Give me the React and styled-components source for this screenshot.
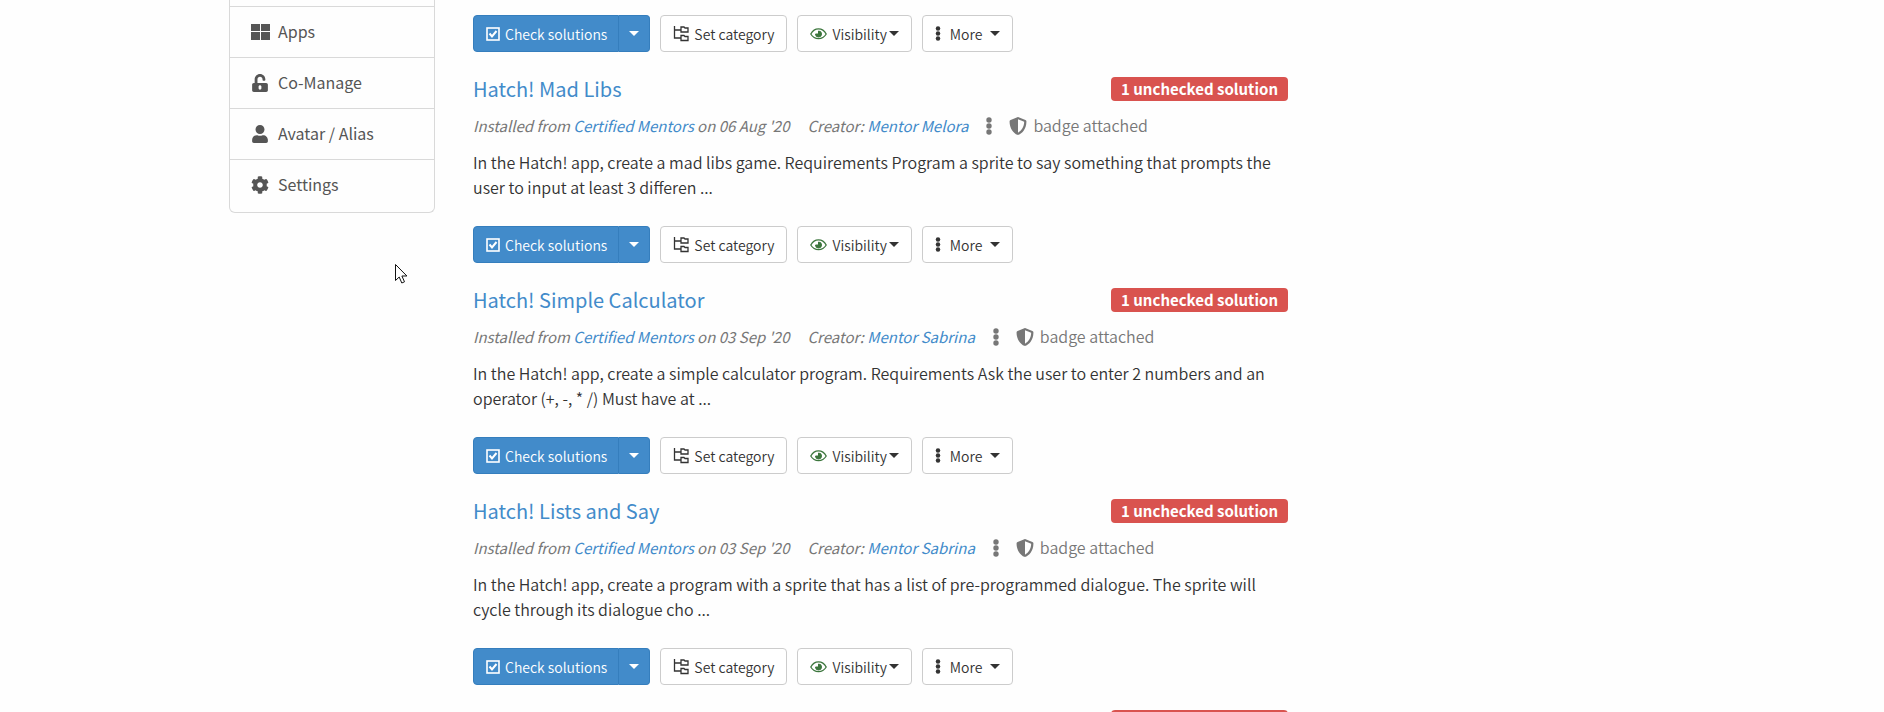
import React from 'react'
import styled, { createGlobalStyle } from 'styled-components'
import { FaUnlockAlt, FaUser, FaCog, FaShieldAlt } from 'react-icons/fa'

const GlobalStyle = createGlobalStyle`
  * {
    box-sizing: border-box;
  }

  body {
    margin: 0;
    background-color: #fefefe;
    color: #333;
    font-family: "Noto Sans CJK SC", "Noto Sans", sans-serif;
    font-size: 16px;
    line-height: 25px;
  }

  a {
    color: #428bca;
    text-decoration: none;
  }

  a:hover {
    text-decoration: underline;
  }
`

const Page = styled.div`
  display: grid;
  grid-template-columns: 206px minmax(0, 815px);
  column-gap: 38px;
  align-items: start;
  max-width: 1426px;
  height: 100vh;
  margin: 0 auto;
  overflow: hidden;
`

const SideNav = styled.nav`
  padding: 6px 0 2px;
  border: 1px solid #d9d9d9;
  border-top: 0;
  border-radius: 0 0 6px 6px;
`

const NavLink = styled.a`
  display: flex;
  align-items: center;
  gap: 8px;
  padding: 12px 20px 13px;
  border-top: 1px solid #d9d9d9;
  color: #555;

  svg {
    width: 20px;
    height: 18px;
  }
`

const Feed = styled.main`
  padding-top: 15px;
`

const Post = styled.article`
  padding-top: 20px;
`

const PostHead = styled.header`
  display: flex;
  justify-content: space-between;
  align-items: flex-start;
  padding-top: 5px;
`

const Title = styled.h3`
  margin: 0;
  font-size: 20px;
  font-weight: 400;
  line-height: 24px;
`

const Badge = styled.span`
  padding: 0 10px;
  border-radius: 4px;
  background-color: #d9534f;
  color: #fff;
  font-size: 15px;
  font-weight: 700;
  line-height: 24px;
`

const Meta = styled.div`
  display: flex;
  align-items: center;
  margin-top: 12px;
  color: #777;
  font-size: 15px;
`

const Source = styled.em`
  margin-right: 18px;
`

const DotsButton = styled.button`
  display: flex;
  margin: 0 17px 0 18px;
  padding: 0;
  border: 0;
  background: none;
  color: inherit;
`

const Attached = styled.span`
  display: flex;
  align-items: center;
  gap: 6px;
  font-size: 16px;
  font-weight: 350;
`

const Summary = styled.p`
  margin: 12px 0 26px;
  font-weight: 350;
`

const Actions = styled.div`
  display: flex;
  gap: 10px;
`

const Group = styled.div`
  display: flex;
`

const Button = styled.button`
  display: flex;
  align-items: center;
  gap: 5px;
  height: 37px;
  padding: 0 12px;
  border: 1px solid ${props => (props.$primary ? '#357ebd' : '#ccc')};
  border-radius: 4px;
  background-color: ${props => (props.$primary ? '#428bca' : '#fff')};
  color: ${props => (props.$primary ? '#fff' : '#333')};
  font-family: inherit;
  font-size: 14px;
  font-weight: 350;
  line-height: 20px;
  cursor: pointer;

  ${Group} > &:first-child {
    padding: 0 11px 0 12px;
    border-radius: 4px 0 0 4px;
  }

  ${Group} > &:last-child {
    padding: 0 10px;
    border-left: 0;
    border-radius: 0 4px 4px 0;
  }
`

const Caret = styled.span`
  margin-left: ${props => props.$space || 0}px;
  border-top: 5px solid;
  border-right: 5px solid transparent;
  border-left: 5px solid transparent;
`

const Label = styled.span`
  display: flex;
  align-items: center;
  margin-left: ${props => props.$space || 0}px;
`

const Pointer = styled.svg`
  position: fixed;
  top: 264px;
  left: 395px;
  pointer-events: none;
`

const AppsIcon = () => (
  <svg viewBox="0 0 20 18" fill="currentColor">
    <path d="M1 1h9v7H1zM11 1h9v7h-9zM1 9h9v8H1zM11 9h9v8h-9z" />
  </svg>
)

const CheckIcon = () => (
  <svg width="14" height="14" viewBox="0 0 14 14" fill="none" stroke="currentColor">
    <rect x="1" y="1" width="12" height="12" strokeWidth="1.6" />
    <path d="M3.500 6.500l2.500 3 4.500-5.500" strokeWidth="2" />
  </svg>
)

const TreeIcon = () => (
  <svg width="16" height="16" viewBox="0 0 16 16" fill="none" stroke="currentColor" strokeWidth="1.3">
    <path d="M1.500 0v12H8M1.500 4H8" />
    <path d="M8 1h3l1 1h3v4H8zM8 9.500h3l1 1h3v4H8z" />
  </svg>
)

const EyeIcon = () => (
  <svg width="17" height="14" viewBox="0 0 17 14" fill="none" stroke="#3c763d">
    <path d="M.8 7C4.500.2 12.500.2 16.200 7 12.500 13.200 4.500 13.200.8 7z" strokeWidth="1.3" />
    <path d="M8.500 4a3 3 0 1 1-3 3h3z" fill="#3c763d" />
  </svg>
)

const DotsIcon = ({ size }) => (
  <svg width="6" height={size} viewBox="0 0 6 18" fill="currentColor">
    <circle cx="3" cy="3" r="2.7" />
    <circle cx="3" cy="9" r="2.7" />
    <circle cx="3" cy="15" r="2.7" />
  </svg>
)

const links = [
  { label: 'Apps', icon: <AppsIcon /> },
  { label: 'Co-Manage', icon: <FaUnlockAlt /> },
  { label: 'Avatar / Alias', icon: <FaUser /> },
  { label: 'Settings', icon: <FaCog /> },
]

const posts = [
  {
    title: 'Hatch! Mad Libs',
    date: "06 Aug '20",
    creator: 'Mentor Melora',
    summary: 'In the Hatch! app, create a mad libs game. Requirements Program a sprite to say something that prompts the user to input at least 3 differen ...',
  },
  {
    title: 'Hatch! Simple Calculator',
    date: "03 Sep '20",
    creator: 'Mentor Sabrina',
    summary: 'In the Hatch! app, create a simple calculator program. Requirements Ask the user to enter 2 numbers and an operator (+, -, * /) Must have at ...',
  },
  {
    title: 'Hatch! Lists and Say',
    date: "03 Sep '20",
    creator: 'Mentor Sabrina',
    summary: 'In the Hatch! app, create a program with a sprite that has a list of pre-programmed dialogue. The sprite will cycle through its dialogue cho ...',
  },
]

const PostActions = () => (
  <Actions>
    <Group>
      <Button $primary>
        <CheckIcon />
        Check solutions
      </Button>
      <Button $primary aria-label="Check options">
        <Caret />
      </Button>
    </Group>
    <Button>
      <TreeIcon />
      Set category
    </Button>
    <Button>
      <EyeIcon />
      <Label>
        Visibility
        <Caret $space={2} />
      </Label>
    </Button>
    <Button>
      <DotsIcon size={15} />
      <Label $space={4}>
        More
        <Caret $space={8} />
      </Label>
    </Button>
  </Actions>
)

export default function App() {
  return (
    <>
      <GlobalStyle />
      <Page>
        <SideNav>
          {links.map(link => (
            <NavLink key={link.label} href="#">
              {link.icon}
              {link.label}
            </NavLink>
          ))}
        </SideNav>
        <Feed>
          <PostActions />
          {posts.map(post => (
            <Post key={post.title}>
              <PostHead>
                <Title>
                  <a href="#">{post.title}</a>
                </Title>
                <Badge>1 unchecked solution</Badge>
              </PostHead>
              <Meta>
                <Source>
                  Installed from <a href="#">Certified Mentors</a> on {post.date}
                </Source>
                <em>
                  Creator: <a href="#">{post.creator}</a>
                </em>
                <DotsButton aria-label="Creator options">
                  <DotsIcon size={18} />
                </DotsButton>
                <Attached>
                  <FaShieldAlt size={18} />
                  badge attached
                </Attached>
              </Meta>
              <Summary>{post.summary}</Summary>
              <PostActions />
            </Post>
          ))}
          <Post>
            <PostHead>
              <Title />
              <Badge>1 unchecked solution</Badge>
            </PostHead>
          </Post>
        </Feed>
      </Page>
      <Pointer width="13" height="21" viewBox="0 0 13 21" fill="#fff" stroke="#111">
        <path d="M.5.5v16l3.700-3.500 2.600 6 2.700-1.200-2.600-5.800h5z" />
      </Pointer>
    </>
  )
}
